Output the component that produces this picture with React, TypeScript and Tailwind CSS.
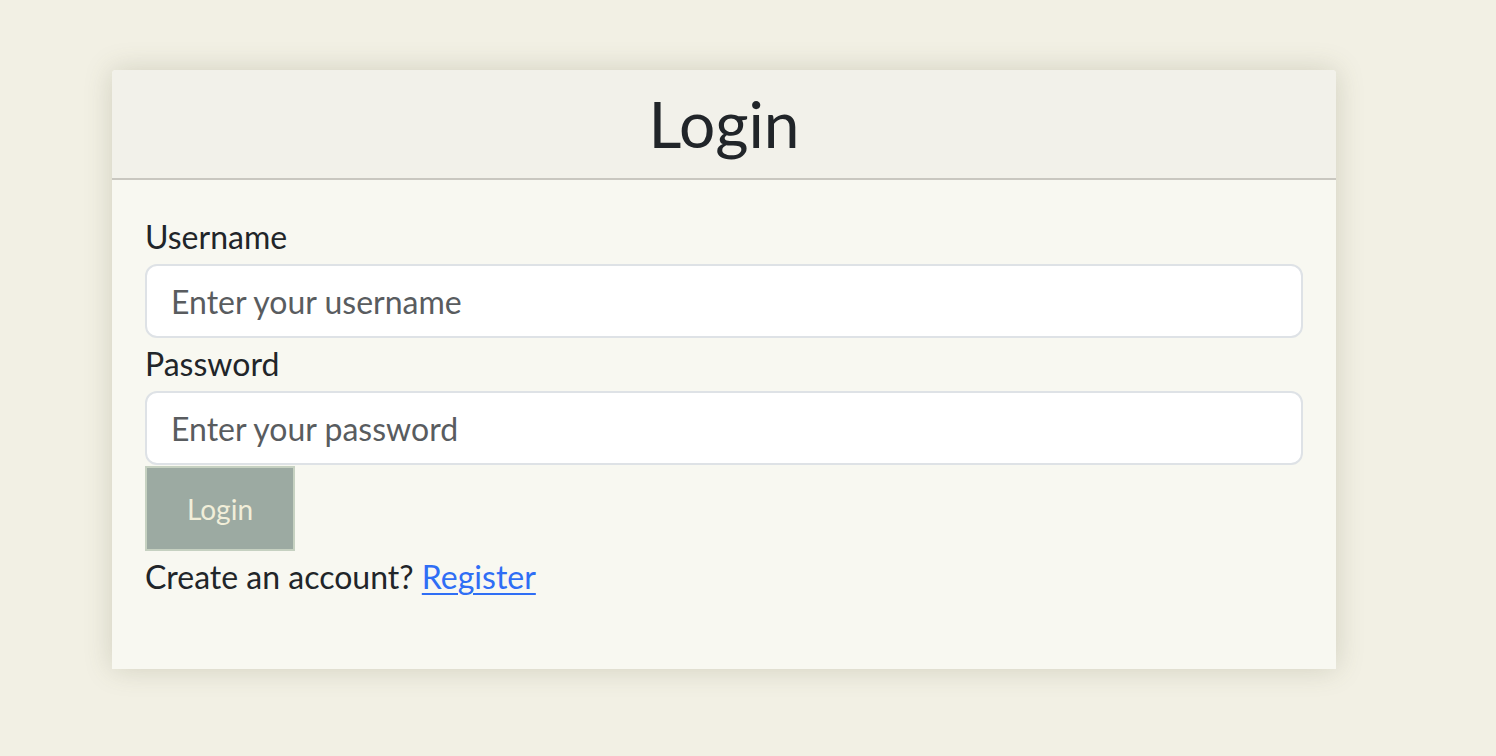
export default function App() {
  return (
    <div
      className="min-h-screen bg-[#f2f0e4] pt-[70px] pl-[112px]"
      style={{ fontFamily: 'Lato, "Open Sans", sans-serif' }}
    >
      <div className="w-[1224px] overflow-hidden rounded-t-[4px] bg-[#f8f8f1] shadow-[0_0_28px_rgba(90,90,60,0.22)]">
        <div className="flex h-[110px] items-start justify-center border-b-2 border-[#c9c7c0] bg-[#f2f1ea] pt-4">
          <h1 className="text-[64px] leading-[1.2] text-[#212529]">Login</h1>
        </div>

        <form className="px-[33px] pt-[33px] pb-[68px] text-[#212529]" onSubmit={(e) => e.preventDefault()}>
          <label className="block text-[32px] leading-[48px]">Username</label>
          <input
            type="text"
            placeholder="Enter your username"
            className="mt-[3px] block h-[74px] w-full rounded-[12px] border-2 border-[#dee2e6] bg-white px-6 text-[32px] text-[#212529] outline-none placeholder:text-[#595c5f]"
          />
          <label className="mt-[2px] block text-[32px] leading-[48px]">Password</label>
          <input
            type="password"
            placeholder="Enter your password"
            className="mt-[3px] block h-[74px] w-full rounded-[12px] border-2 border-[#dee2e6] bg-white px-6 text-[32px] text-[#212529] outline-none placeholder:text-[#595c5f]"
          />
          <button
            type="submit"
            className="mt-px block h-[85px] w-[150px] border-2 border-[#c6d1c1] bg-[#9caaa2] text-[28px] text-[#f1eed9]"
          >
            Login
          </button>
          <p className="mt-[2px] text-[32px] leading-[48px]">
            Create an account?{' '}
            <a href="#" className="text-[#2f6ef5] underline decoration-2 underline-offset-[4px]">
              Register
            </a>
          </p>
        </form>
      </div>
    </div>
  );
}
